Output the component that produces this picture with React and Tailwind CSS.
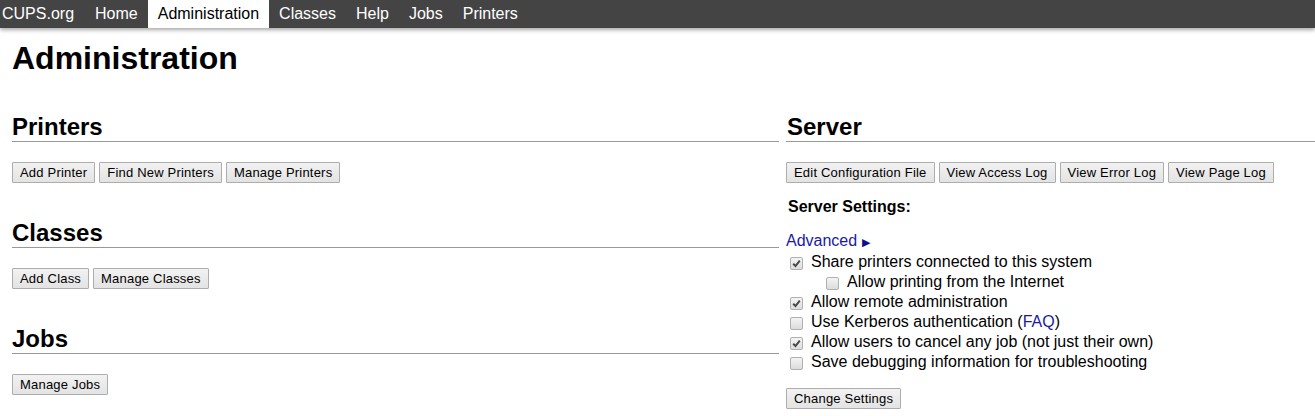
import React from 'react'

const Btn = ({ children }) => (
  <button
    className="h-[21px] px-[7px] border border-[#adadad] rounded-[1px] text-[13px] leading-[15px] tracking-[0.2px] text-black bg-gradient-to-b from-[#f2f2f2] to-[#e3e3e3] whitespace-nowrap"
  >
    {children}
  </button>
)

const H2 = ({ children, className = '' }) => (
  <h2 className={`text-[24px] font-bold leading-[28px] border-b border-[#999] text-black ${className}`}>
    {children}
  </h2>
)

const Check = ({ checked }) => (
  <span className="inline-flex items-center justify-center w-[13px] h-[13px] mt-[5px] ml-[4px] mr-[8px] border border-[#b0b0b0] rounded-[2px] bg-gradient-to-b from-[#f4f4f4] to-[#dcdcdc] shrink-0 self-start">
    {checked && (
      <svg width="9" height="9" viewBox="0 0 9 9">
        <path d="M1.2 4.8 L3.5 7 L7.8 1.6" fill="none" stroke="#444" strokeWidth="1.9" />
      </svg>
    )}
  </span>
)

const Row = ({ checked, indent, children }) => (
  <div className={`flex h-[20px] leading-[20px] ${indent ? 'pl-[36px]' : ''}`}>
    <Check checked={checked} />
    <span>{children}</span>
  </div>
)

const navItems = ['Home', 'Administration', 'Classes', 'Help', 'Jobs', 'Printers']

export default function App() {
  return (
    <div className="min-h-[416px] bg-white text-black" style={{ fontFamily: '"Liberation Sans", Arial, sans-serif' }}>
      <div className="flex h-[28px] bg-[#444] text-white text-[16px] leading-[28px] shadow-[0_2px_4px_rgba(0,0,0,0.35)] relative">
        <span className="pl-[2px] pr-[11px]">CUPS.org</span>
        {navItems.map((item) => (
          <span
            key={item}
            className={item === 'Administration' ? 'px-[10px] bg-white text-black' : 'px-[10px]'}
          >
            {item}
          </span>
        ))}
      </div>

      <div className="pl-[12px]">
        <h1 className="mt-[12px] text-[32px] font-bold leading-[37px]">Administration</h1>

        <div className="flex mt-[36px]">
          <div className="w-[767px]">
            <H2>Printers</H2>
            <div className="flex gap-[4px] mt-[20px]">
              <Btn>Add Printer</Btn>
              <Btn>Find New Printers</Btn>
              <Btn>Manage Printers</Btn>
            </div>

            <H2 className="mt-[36px]">Classes</H2>
            <div className="flex gap-[4px] mt-[20px]">
              <Btn>Add Class</Btn>
              <Btn>Manage Classes</Btn>
            </div>

            <H2 className="mt-[36px]">Jobs</H2>
            <div className="flex gap-[4px] mt-[20px]">
              <Btn>Manage Jobs</Btn>
            </div>
          </div>

          <div className="flex-1 ml-[7px]">
            <H2 className="pl-[1px]">Server</H2>
            <div className="flex gap-[4px] mt-[20px]">
              <Btn>Edit Configuration File</Btn>
              <Btn>View Access Log</Btn>
              <Btn>View Error Log</Btn>
              <Btn>View Page Log</Btn>
            </div>

            <div className="mt-[15px] pl-[2px] text-[16px] font-bold leading-[18px]">Server Settings:</div>

            <div className="mt-[16px] text-[16px] leading-[18px] text-[#1a1aa6]">
              Advanced <span className="text-[11px] text-[#0f0f8f]">▶</span>
            </div>

            <div className="mt-[1px] text-[16px]">
              <Row checked>Share printers connected to this system</Row>
              <Row indent>Allow printing from the Internet</Row>
              <Row checked>Allow remote administration</Row>
              <Row>
                Use Kerberos authentication (<span className="text-[#1a1aa6]">FAQ</span>)
              </Row>
              <Row checked>Allow users to cancel any job (not just their own)</Row>
              <Row>Save debugging information for troubleshooting</Row>
            </div>

            <div className="flex mt-[16px]">
              <Btn>Change Settings</Btn>
            </div>
          </div>
        </div>
      </div>
    </div>
  )
}
